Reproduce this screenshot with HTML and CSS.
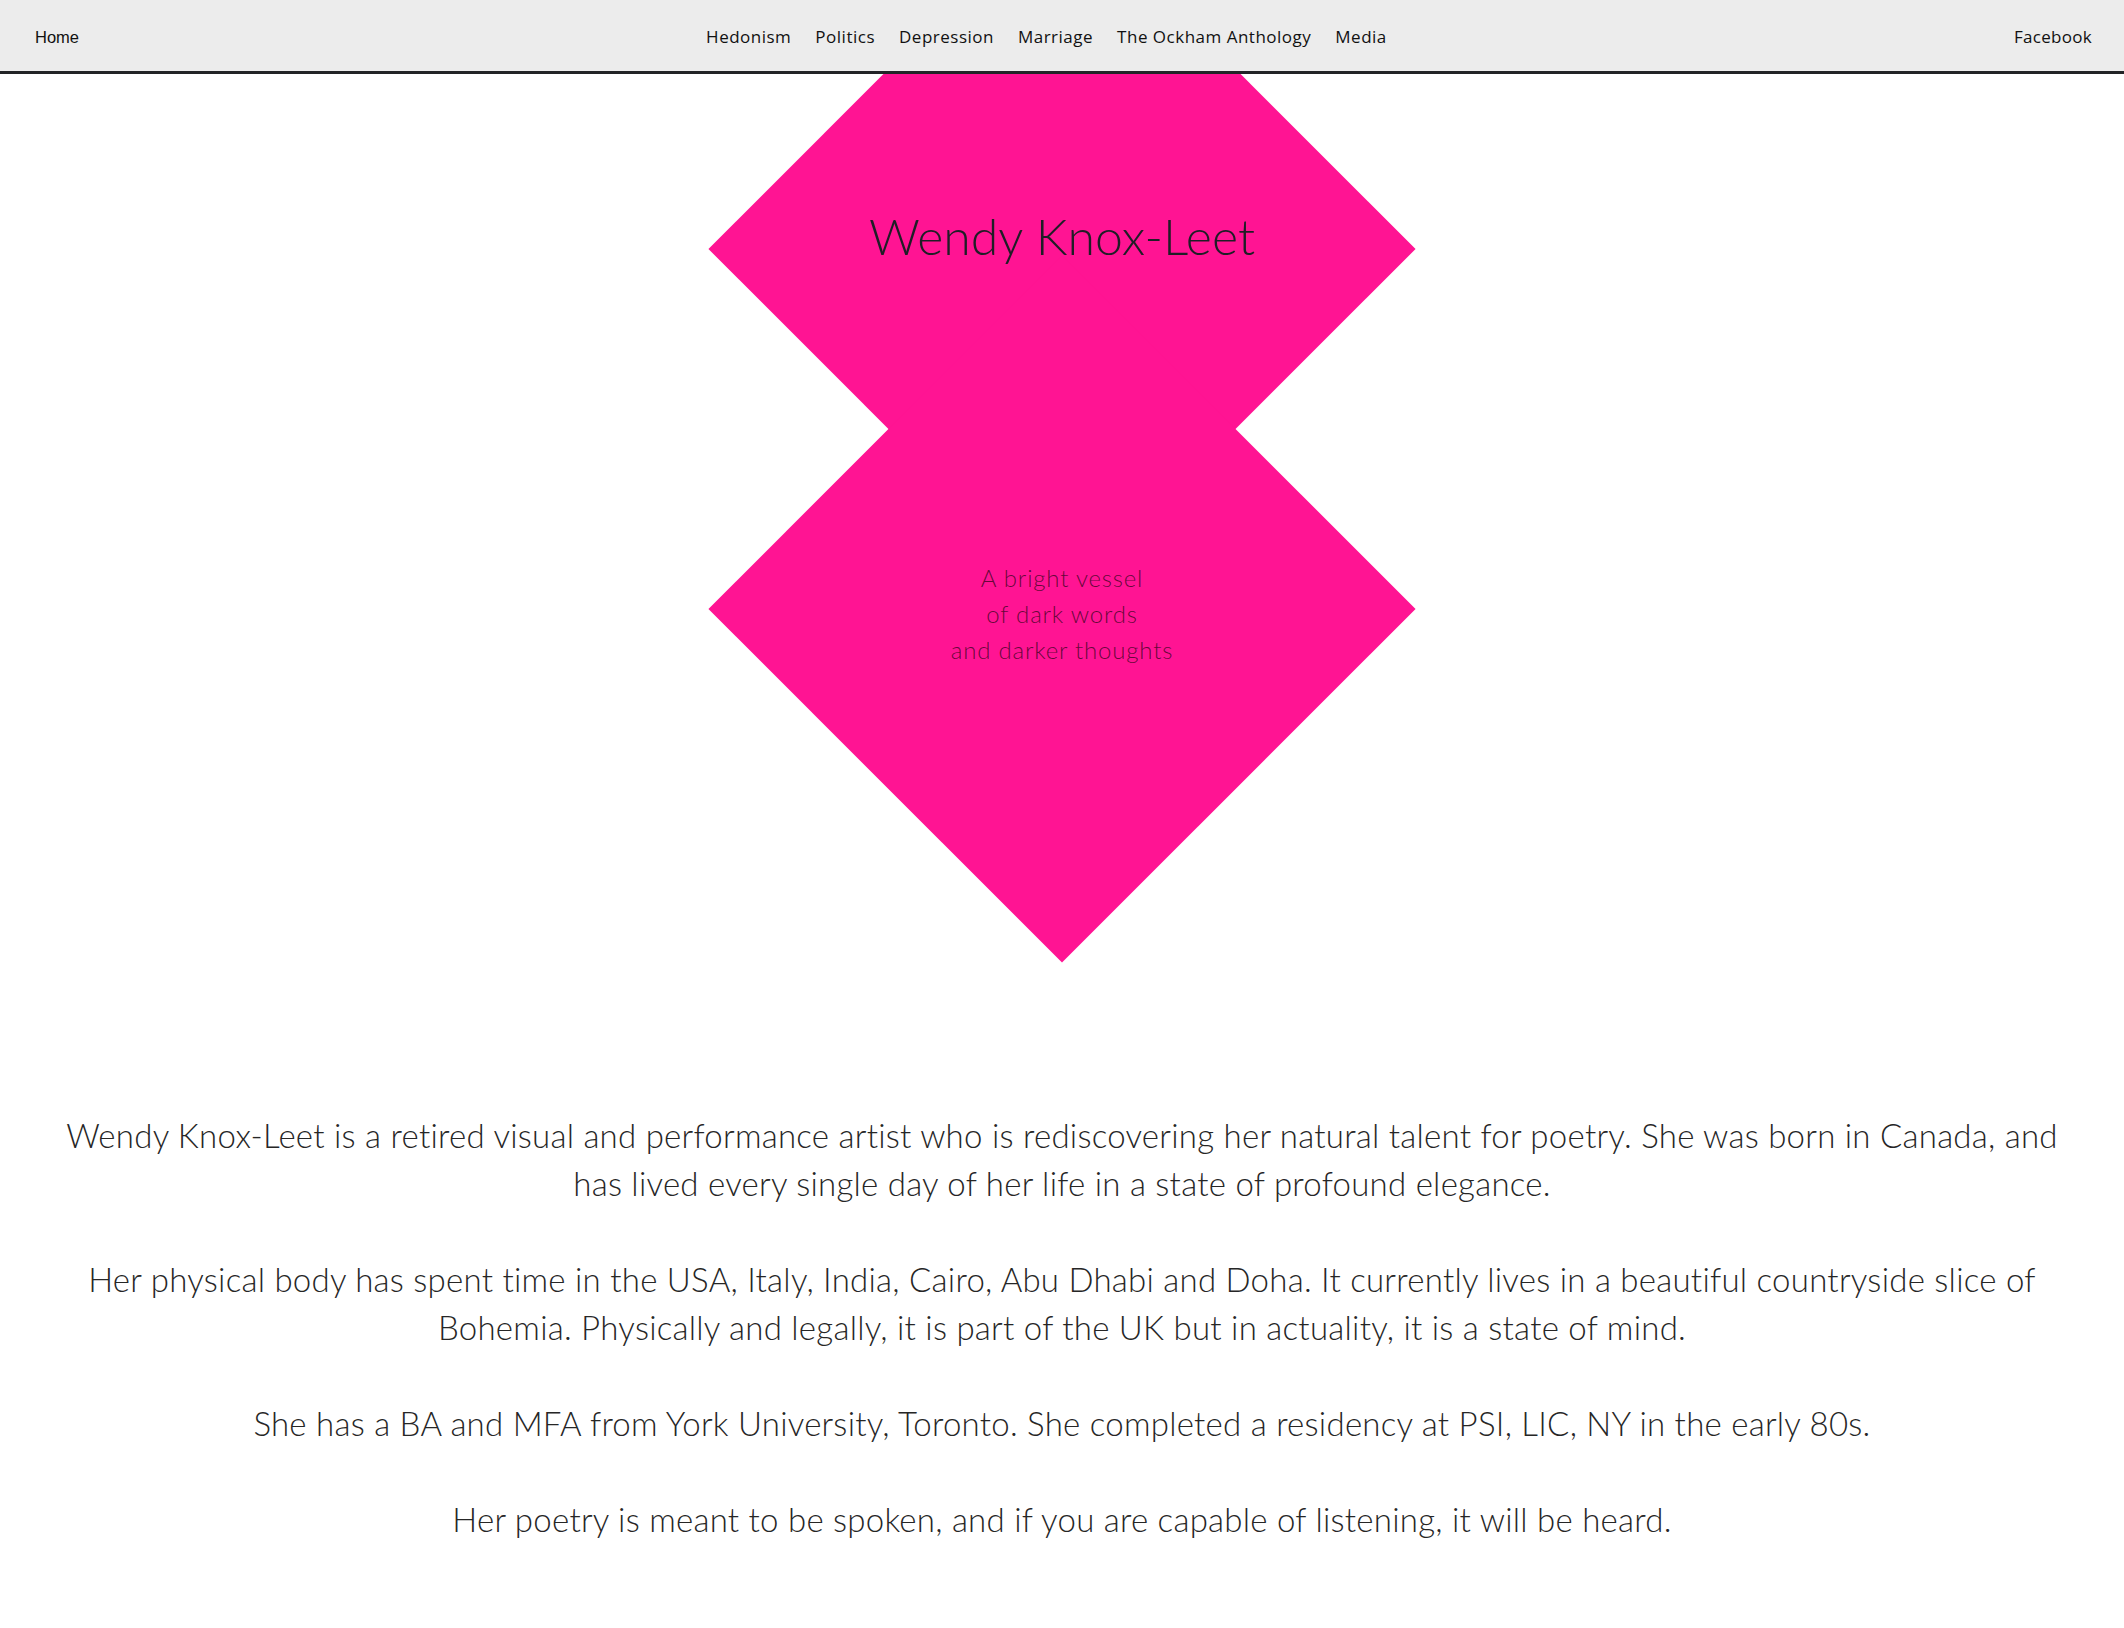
FILE: index.html
```html
<!DOCTYPE html>
<html lang="en">
<head>
<meta charset="utf-8">
<title>Wendy Knox-Leet</title>
<link rel="stylesheet" href="styles.css">
</head>
<body>
<nav class="topnav">
  <a class="nav-home" href="#">Home</a>
  <ul class="nav-links">
    <li><a href="#">Hedonism</a></li>
    <li><a href="#">Politics</a></li>
    <li><a href="#">Depression</a></li>
    <li><a href="#">Marriage</a></li>
    <li><a href="#">The Ockham Anthology</a></li>
    <li><a href="#">Media</a></li>
  </ul>
  <a class="nav-fb" href="#">Facebook</a>
</nav>
<header class="hero">
  <div class="diamond diamond-top">
    <h1 class="hero-title">Wendy Knox-Leet</h1>
  </div>
  <div class="diamond diamond-bottom">
    <p class="hero-tagline">A bright vessel<br>of dark words<br>and darker thoughts</p>
  </div>
</header>
<main class="bio">
  <p>Wendy Knox-Leet is a retired visual and performance artist who is rediscovering her natural talent for poetry. She was born in Canada, and has lived every single day of her life in a state of profound elegance.</p>
  <p>Her physical body has spent time in the USA, Italy, India, Cairo, Abu Dhabi and Doha. It currently lives in a beautiful countryside slice of Bohemia. Physically and legally, it is part of the UK but in actuality, it is a state of mind.</p>
  <p>She has a BA and MFA from York University, Toronto. She completed a residency at PSI, LIC, NY in the early 80s.</p>
  <p>Her poetry is meant to be spoken, and if you are capable of listening, it will be heard.</p>
</main>
</body>
</html>
```
FILE: styles.css
```css
* { box-sizing: border-box; }
html, body { margin: 0; padding: 0; background: #fff; }
body { font-family: "Lato", "Open Sans", sans-serif; color: #2a2a2a; }

.topnav {
  height: 74px;
  background: #ececec;
  border-bottom: 3px solid #222427;
  display: flex;
  align-items: center;
  justify-content: space-between;
  padding: 1px 32px 0 35px;
  position: relative;
  z-index: 2;
}
.topnav a { text-decoration: none; color: #111; }
.nav-home { font-family: "Liberation Sans", Arial, sans-serif; font-size: 16.5px; padding-top: 2px; }
.nav-links { list-style: none; margin: 0; padding: 0; display: flex; gap: 24px; }
.nav-links a, .nav-fb { font-family: "Open Sans", sans-serif; font-size: 17px; font-weight: 500; letter-spacing: 0.5px; }
.nav-fb { letter-spacing: 0.3px; }

.hero {
  display: flex;
  flex-direction: column;
  align-items: center;
  overflow: hidden;
  padding-bottom: 252px;
}
.diamond {
  width: 500px;
  height: 500px;
  position: relative;
  display: flex;
  align-items: center;
  justify-content: center;
  z-index: 0;
}
.diamond::before {
  content: "";
  position: absolute;
  inset: 0;
  background: #ff1493;
  transform: rotate(45deg);
  z-index: -1;
}
.diamond-top { margin-top: -75px; padding-bottom: 26px; }
.diamond-bottom { margin-top: -140px; padding-top: 10px; }

.hero-title {
  margin: 0;
  font-weight: 300;
  font-size: 50px;
  color: #1e1e26;
  line-height: 1.2;
}
.hero-tagline {
  margin: 0;
  font-weight: 300;
  font-size: 24px;
  letter-spacing: 0.8px;
  line-height: 36px;
  text-align: center;
  color: rgba(0, 0, 0, 0.62);
}

.bio {
  padding: 0 50px 40px;
  text-align: center;
  font-weight: 300;
  font-size: 33px;
  letter-spacing: 0.25px;
  line-height: 48px;
  color: #262626;
}
.bio p { margin: 0 0 48px; }
```
